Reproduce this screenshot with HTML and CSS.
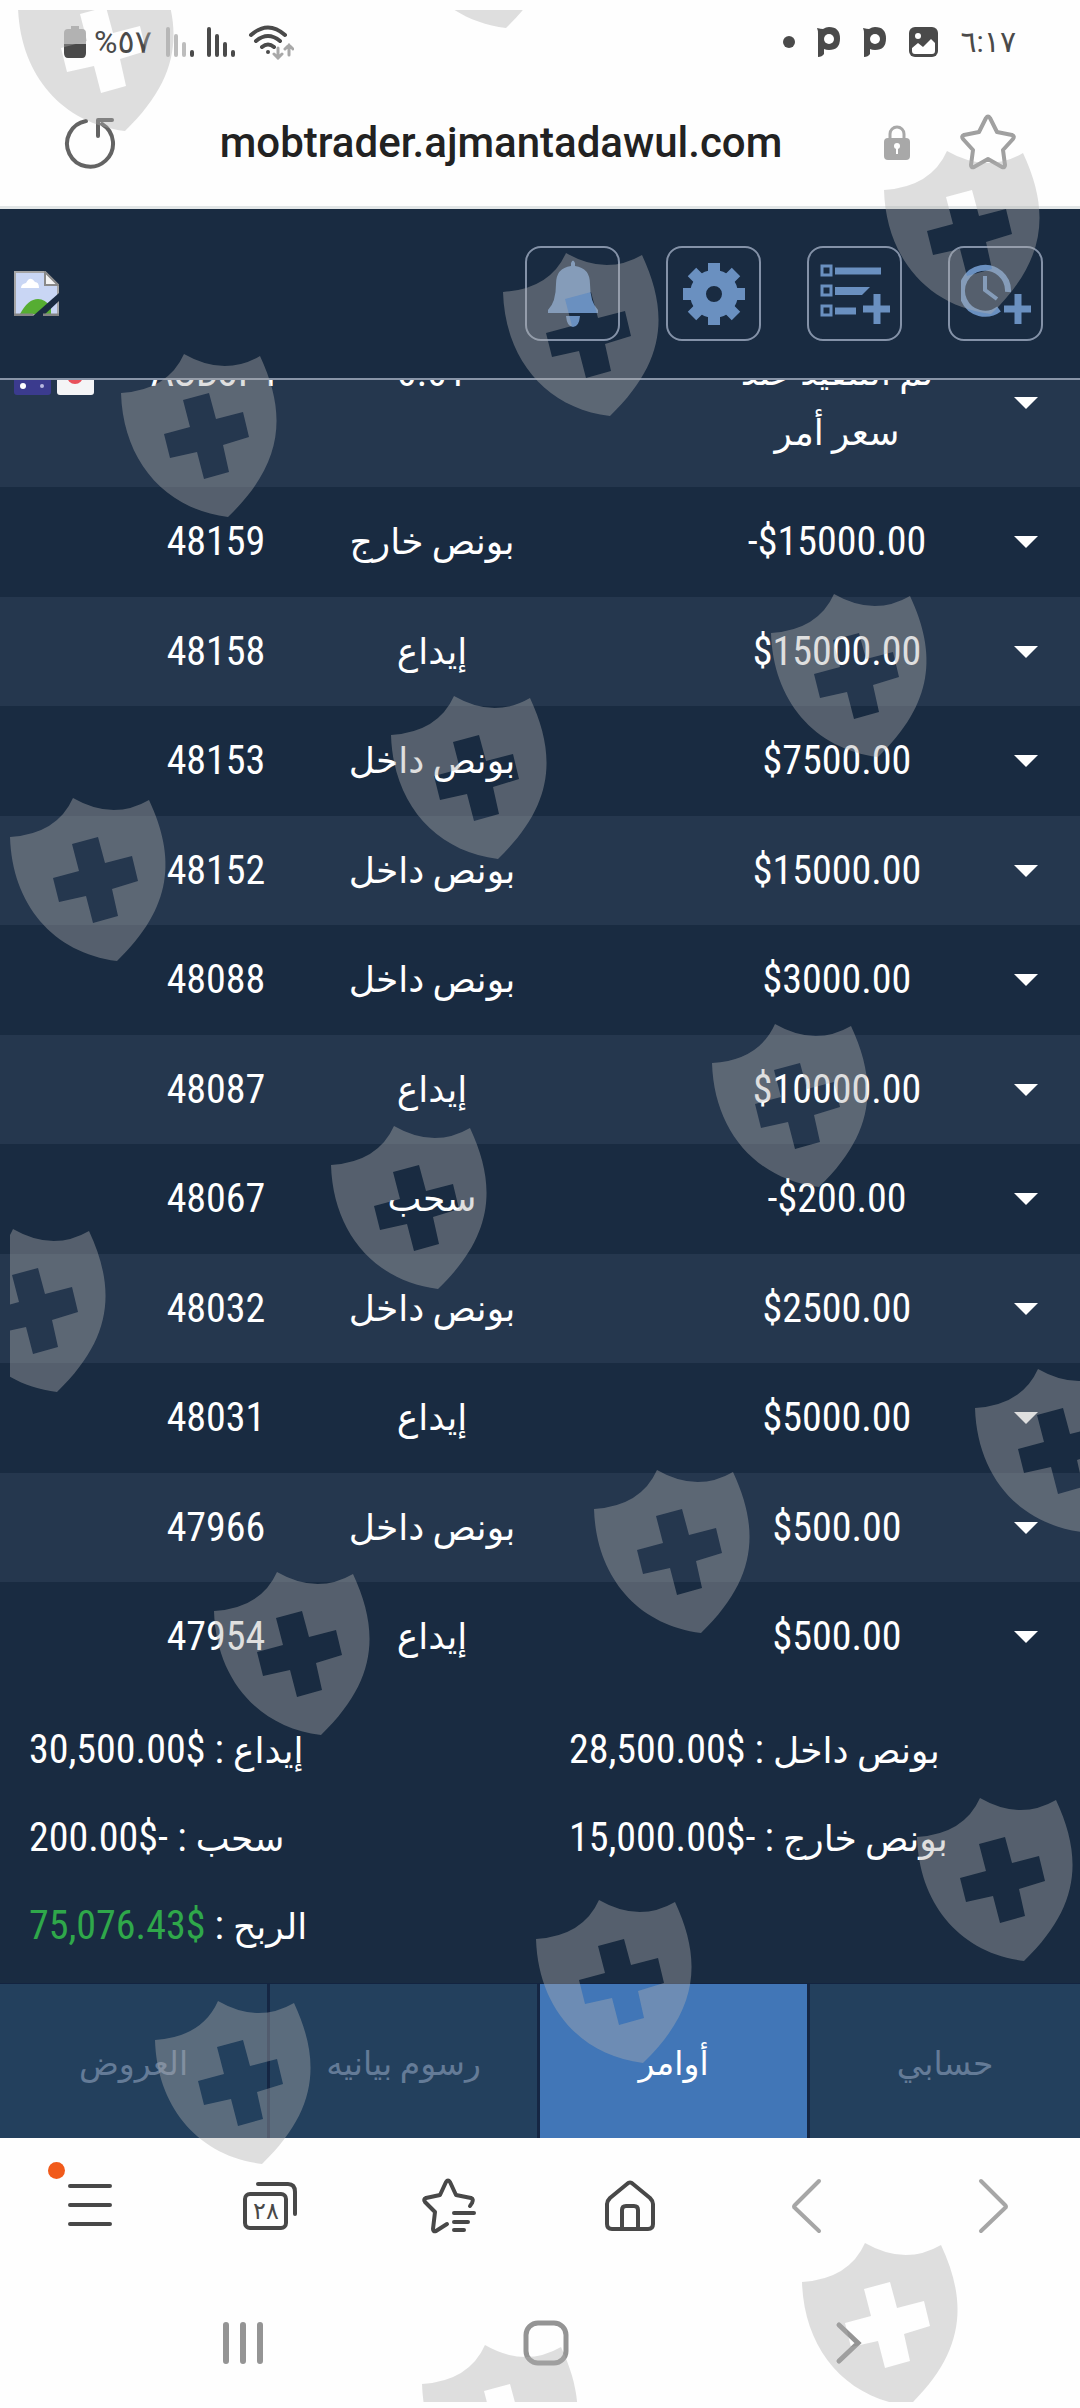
FILE: index.html
```html
<!DOCTYPE html>
<html lang="ar">

<head>
    <meta charset="utf-8">
    <meta name="viewport" content="width=device-width, initial-scale=1">
    <title>mobtrader.ajmantadawul.com</title>
    <link rel="stylesheet" href="styles.css">
</head>

<body>
    <div class="page">
        <div class="status-bar">
            <div class="status-group">
                <svg width="22" height="32" viewBox="0 0 22 32"><path d="M7 0h8v3h3q4 0 4 4v11H0V7q0-4 4-4h3z" fill="#b5b5b5"/><path d="M0 18h22v9q0 5-4 5H4q-4 0-4-5z" fill="#4a4a4a"/></svg>
                <span class="battery-text">%٥٧</span>
                <svg class="signal" width="28" height="32" viewBox="0 0 28 32" fill="none" stroke-width="4" stroke-linecap="round"><path d="M2 3v26M10 10v19M18 18v11" stroke="#bdbdbd"/><path d="M26 26v3" stroke="#4a4a4a"/></svg>
                <svg class="signal" width="28" height="32" viewBox="0 0 28 32" fill="none" stroke="#4a4a4a" stroke-width="4" stroke-linecap="round"><path d="M2 3v26M10 10v19M18 18v11M26 26v3"/></svg>
                <svg width="46" height="36" viewBox="0 0 46 36" fill="none" stroke-width="4" stroke-linecap="round"><path d="M3 11Q20-4 37 11M8 17Q20 7 32 17M14 23Q20 18 26 23" stroke="#4a4a4a"/><circle cx="20" cy="28" r="2" fill="#4a4a4a"/><path d="M30 24v10M26 30l4 4 4-4M41 31V21M37 25l4-4 4 4" stroke="#a8a8a8" stroke-width="3"/></svg>
            </div>
            <div class="status-group status-right">
                <svg width="12" height="12" viewBox="0 0 12 12"><circle cx="6" cy="6" r="6" fill="#4a4a4a"/></svg>
                <svg width="24" height="31" viewBox="0 0 24 31"><path d="M0 1q4 1 6 1Q9 0 12 0q11 0 11 11.500T12 23q-3 0-5-1v5q-2 3-6 3V7Q1 3 0 1z" fill="#4a4a4a"/><circle cx="12" cy="12" r="5" fill="#fff"/></svg>
                <svg width="24" height="31" viewBox="0 0 24 31"><path d="M0 1q4 1 6 1Q9 0 12 0q11 0 11 11.500T12 23q-3 0-5-1v5q-2 3-6 3V7Q1 3 0 1z" fill="#4a4a4a"/><circle cx="12" cy="12" r="5" fill="#fff"/></svg>
                <svg width="29" height="30" viewBox="0 0 29 30"><rect width="29" height="30" rx="6" fill="#4a4a4a"/><circle cx="9" cy="9" r="3" fill="#fff"/><path d="M3 21l6-5 5 4 8-8 4 4v8q0 3-3 3H6q-3 0-3-3z" fill="#fff"/></svg>
                <time class="clock">٦:١٧</time>
            </div>
        </div>

        <div class="address-bar">
            <button class="plain-btn" aria-label="Reload">
                <svg width="54" height="54" viewBox="0 0 54 54" fill="none" stroke="#636363" stroke-width="4" stroke-linecap="round"><path d="M22 6A23 23 0 1 0 38 9"/><path d="M48 5H34v16" stroke-linejoin="round"/></svg>
            </button>
            <a class="url" href="#">mobtrader.ajmantadawul.com</a>
            <svg class="lock" width="26" height="36" viewBox="0 0 26 36"><path d="M6 16V10a7 7 0 0 1 14 0v6" fill="none" stroke="#a8a8a8" stroke-width="3"/><rect y="14" width="26" height="22" rx="4" fill="#a8a8a8"/><circle cx="13" cy="22" r="3" fill="#fff"/><path d="M12 22h2v8h-2z" fill="#fff"/></svg>
            <button class="plain-btn" aria-label="Bookmark">
                <svg width="56" height="56" viewBox="0 0 56 56" fill="none" stroke="#a0a0a0" stroke-width="4" stroke-linejoin="round"><path d="M26 4q2-3 4 0l7 14 15 3q3 1 1 4L43 36l2 15q0 3-3 2l-14-8-14 8q-3 1-3-2l2-15L3 25q-2-3 1-4l15-3z"/></svg>
            </button>
        </div>

        <header class="app-header">
            <svg width="45" height="45" viewBox="0 0 45 45" role="img" aria-label="logo"><path d="M1 1h30l13 13v30H1z" fill="#c9d6f4" stroke="#a5a5a5" stroke-width="2"/><path d="M7 17q0-4 5-5 4-8 9-1 4 0 4 6z" fill="#fff"/><path d="M6 43q8-15 18-15 7 0 13 8v7z" fill="#56ad32"/><path d="M31 1l13 13H31z" fill="#f4f4f4" stroke="#8a8a8a" stroke-width="2"/><path d="M45 22L19 45h10l16-15z" fill="#1a2b41"/><path d="M0 44h19M29 44h16" stroke="#858585" stroke-width="3"/></svg>
            <div class="header-actions">
                <button class="icon-btn" aria-label="Notifications">
                    <svg width="70" height="70" viewBox="0 0 70 70" fill="#6a90c0"><path d="M33 4q2-5 4 0v3q15 2 15 18 0 18 8 26v3H10v-3q8-8 8-26 0-16 15-18zM28 57h14q-1 11-7 11t-7-11z"/></svg>
                </button>
                <button class="icon-btn" aria-label="Settings">
                    <svg width="70" height="70" viewBox="0 0 70 70" fill="none" stroke="#6a90c0"><circle cx="35" cy="35" r="16" stroke-width="16"/><path d="M35 4v10M35 56v10M4 35h10M56 35h10M13 13l7 7M50 50l7 7M57 13l-7 7M20 50l-7 7" stroke-width="12"/></svg>
                </button>
                <button class="icon-btn" aria-label="New order">
                    <svg width="70" height="70" viewBox="0 0 70 70" fill="none" stroke="#6a90c0"><path d="M2 7h9v9H2zM2 27h9v9H2zM2 47h9v9H2z" stroke-width="3"/><path d="M15 12h46M15 52h21M57 35v30M43 50h28" stroke-width="7"/><path d="M15 28h35l-8 8H15z" fill="#6a90c0" stroke="none"/></svg>
                </button>
                <button class="icon-btn" aria-label="New pending order">
                    <svg width="70" height="70" viewBox="0 0 70 70" fill="none" stroke="#6a90c0"><path d="M47 33A23 23 0 1 0 38 50" stroke-width="6"/><path d="M24 17v14l12 9" stroke-width="4"/><path d="M57 35v30M43 50h28" stroke-width="7"/></svg>
                </button>
            </div>
        </header>

        <main class="orders">
            <div class="orders-scroll">
                <table class="orders-table">
                    <colgroup>
                        <col class="col-flag"><col class="col-id"><col class="col-type"><col class="col-gap"><col class="col-amount"><col class="col-more">
                    </colgroup>
                    <tbody>
                        <tr>
                            <td class="flags"><svg width="80" height="27" viewBox="0 0 80 27"><rect width="37" height="27" rx="3" fill="#3b3b8e"/><circle cx="9" cy="18" r="3" fill="#fff"/><circle cx="28" cy="18" r="2" fill="#b9b9e0"/><rect x="43" width="37" height="27" rx="3" fill="#f4f4f6"/><circle cx="61" cy="8" r="8" fill="#e8505b"/></svg></td>
                            <td>AUDJPY</td><td>0.01</td><td></td>
                            <td class="status">تم التنفيذ عند<br>سعر أمر</td>
                            <td class="more"><button class="caret" aria-label="Details"></button></td>
                        </tr>
                        <tr><td></td><td>48159</td><td class="type">بونص خارج</td><td></td><td>-$15000.00</td><td class="more"><button class="caret" aria-label="Details"></button></td></tr>
                        <tr><td></td><td>48158</td><td class="type">إيداع</td><td></td><td>$15000.00</td><td class="more"><button class="caret" aria-label="Details"></button></td></tr>
                        <tr><td></td><td>48153</td><td class="type">بونص داخل</td><td></td><td>$7500.00</td><td class="more"><button class="caret" aria-label="Details"></button></td></tr>
                        <tr><td></td><td>48152</td><td class="type">بونص داخل</td><td></td><td>$15000.00</td><td class="more"><button class="caret" aria-label="Details"></button></td></tr>
                        <tr><td></td><td>48088</td><td class="type">بونص داخل</td><td></td><td>$3000.00</td><td class="more"><button class="caret" aria-label="Details"></button></td></tr>
                        <tr><td></td><td>48087</td><td class="type">إيداع</td><td></td><td>$10000.00</td><td class="more"><button class="caret" aria-label="Details"></button></td></tr>
                        <tr><td></td><td>48067</td><td class="type">سحب</td><td></td><td>-$200.00</td><td class="more"><button class="caret" aria-label="Details"></button></td></tr>
                        <tr><td></td><td>48032</td><td class="type">بونص داخل</td><td></td><td>$2500.00</td><td class="more"><button class="caret" aria-label="Details"></button></td></tr>
                        <tr><td></td><td>48031</td><td class="type">إيداع</td><td></td><td>$5000.00</td><td class="more"><button class="caret" aria-label="Details"></button></td></tr>
                        <tr><td></td><td>47966</td><td class="type">بونص داخل</td><td></td><td>$500.00</td><td class="more"><button class="caret" aria-label="Details"></button></td></tr>
                        <tr><td></td><td>47954</td><td class="type">إيداع</td><td></td><td>$500.00</td><td class="more"><button class="caret" aria-label="Details"></button></td></tr>
                    </tbody>
                </table>
            </div>

            <div class="summary">
                <div><p dir="rtl"><span class="label">إيداع</span> : $30,500.00</p></div>
                <div><p dir="rtl"><span class="label">بونص داخل</span> : $28,500.00</p></div>
                <div><p dir="rtl"><span class="label">سحب</span> : -$200.00</p></div>
                <div><p dir="rtl"><span class="label">بونص خارج</span> : -$15,000.00</p></div>
                <div><p dir="rtl"><span class="label">الربح</span> : <span class="profit">$75,076.43</span></p></div>
            </div>
        </main>

        <nav class="tabs">
            <a href="#">العروض</a>
            <a href="#">رسوم بيانيه</a>
            <a href="#" class="active">أوامر</a>
            <a href="#">حسابي</a>
        </nav>

        <div class="browser-bar">
            <button class="plain-btn menu-btn" aria-label="Menu">
                <svg width="60" height="60" viewBox="0 0 60 60" stroke="#484848" stroke-width="4" stroke-linecap="round"><path d="M10 11h40M10 30h40M10 49h40"/></svg>
                <span class="dot"></span>
            </button>
            <button class="plain-btn" aria-label="Tabs">
                <svg width="60" height="60" viewBox="0 0 60 60" fill="none" stroke="#484848" stroke-width="4" stroke-linecap="round"><rect x="5" y="19" width="41" height="34" rx="5"/><path d="M18 9h30q7 0 7 8v22"/><text class="tab-count" x="26" y="44" text-anchor="middle">٢٨</text></svg>
            </button>
            <button class="plain-btn" aria-label="Bookmarks">
                <svg width="60" height="60" viewBox="0 0 60 60" fill="none" stroke="#484848" stroke-width="4" stroke-linecap="round" stroke-linejoin="round"><path d="M50 31l2-3q2-4-1-5l-15-3-6-13q-2-3-4 0l-6 13-14 3q-3 1-1 4l10 10-2 17q0 3 3 2l11-7M34 38h20M34 47h14M34 55h10"/></svg>
            </button>
            <button class="plain-btn" aria-label="Home">
                <svg width="60" height="60" viewBox="0 0 60 60" fill="none" stroke="#484848" stroke-width="4" stroke-linejoin="round"><path d="M27 9q3-3 6 0l17 14q3 3 3 6v20q0 5-5 5H12q-5 0-5-5V29q0-3 3-6zM22 54V35q0-4 4-4h8q4 0 4 4v19"/></svg>
            </button>
            <button class="plain-btn" aria-label="Back">
                <svg width="60" height="60" viewBox="0 0 60 60" fill="none" stroke="#a6a6a6" stroke-width="4" stroke-linecap="round" stroke-linejoin="round"><path d="M39 6L15 30q-2 2 0 3l24 23"/></svg>
            </button>
            <button class="plain-btn" aria-label="Forward">
                <svg width="60" height="60" viewBox="0 0 60 60" fill="none" stroke="#a6a6a6" stroke-width="4" stroke-linecap="round" stroke-linejoin="round"><path d="M21 6l24 24q2 2 0 3L21 56"/></svg>
            </button>
        </div>

        <div class="system-bar">
            <button class="plain-btn" aria-label="Recent apps">
                <svg width="50" height="50" viewBox="0 0 50 50" stroke="#949494" stroke-width="6" stroke-linecap="round"><path d="M8 7v36M25 7v36M42 7v36"/></svg>
            </button>
            <button class="plain-btn" aria-label="Home screen">
                <svg width="50" height="50" viewBox="0 0 50 50" fill="none" stroke="#949494" stroke-width="5"><rect x="5" y="5" width="40" height="40" rx="12"/></svg>
            </button>
            <button class="plain-btn" aria-label="System back">
                <svg width="50" height="50" viewBox="0 0 50 50" fill="none" stroke="#949494" stroke-width="5" stroke-linecap="round"><path d="M15 7l19 18-19 18"/></svg>
            </button>
        </div>

        <svg class="watermark" viewBox="0 0 1080 2408" aria-hidden="true">
            <defs>
                <path id="shield" fill-rule="evenodd" d="M63 0Q103 23 139 2C166 60 163 109 107 163C43 155 2 106 0 39Q47 36 63 0ZM62 46L88 39L95 65L122 58L128 83L102 91L108 118L83 125L76 98L49 104L43 80L69 73Z"/>
                <clipPath id="frame"><rect x="10" y="10" width="1070" height="2392"/></clipPath>
            </defs>
            <g clip-path="url(#frame)">
                <use href="#shield" x="18" y="-32"/>
                <use href="#shield" x="399" y="-135"/>
                <use href="#shield" x="884" y="151"/>
                <use href="#shield" x="121" y="354"/>
                <use href="#shield" x="503" y="253"/>
                <use href="#shield" x="771" y="594"/>
                <use href="#shield" x="391" y="696"/>
                <use href="#shield" x="10" y="798"/>
                <use href="#shield" x="712" y="1024"/>
                <use href="#shield" x="331" y="1126"/>
                <use href="#shield" x="-50" y="1229"/>
                <use href="#shield" x="975" y="1369"/>
                <use href="#shield" x="594" y="1470"/>
                <use href="#shield" x="214" y="1572"/>
                <use href="#shield" x="917" y="1798"/>
                <use href="#shield" x="536" y="1900"/>
                <use href="#shield" x="155" y="2001"/>
                <use href="#shield" x="802" y="2243"/>
                <use href="#shield" x="422" y="2345"/>
            </g>
        </svg>
    </div>
</body>

</html>
```
FILE: styles.css
```css
* {
    box-sizing: border-box;
}

body {
    font-family: "Roboto Condensed", "Liberation Sans Narrow", Roboto, "DejaVu Sans", sans-serif;
    font-size: 40px;
    margin: 0;
    padding: 0;
    background-color: #fefefe;
}

svg {
    display: block;
}

button {
    font: inherit;
    cursor: pointer;
}

.page {
    position: relative;
    min-height: 100vh;
    overflow: hidden;
    display: flex;
    flex-direction: column;
}

.plain-btn {
    background: none;
    border: none;
    padding: 0;
    display: flex;
    justify-content: center;
    align-items: center;
}

/* phone status bar */
.status-bar {
    display: flex;
    justify-content: space-between;
    align-items: center;
    height: 84px;
    padding: 0 64px;
    color: #4a4a4a;
}

.status-group {
    display: flex;
    align-items: center;
    gap: 8px;
}

.status-right {
    gap: 22px;
}

.signal {
    margin-right: 5px;
}

.battery-text,
.clock {
    font-family: Roboto, "DejaVu Sans", sans-serif;
    font-size: 32px;
    line-height: 40px;
}

.battery-text {
    margin-right: 6px;
}

.clock {
    font-size: 30px;
}

/* address bar */
.address-bar {
    display: flex;
    align-items: center;
    height: 125px;
    padding: 0 64px 6px;
    border-bottom: 3px solid #e2e6e7;
}

.url {
    flex: 1;
    font-family: Roboto, sans-serif;
    font-size: 42px;
    font-weight: 500;
    color: #222;
    text-align: center;
    text-decoration: none;
}

.lock {
    margin-right: 50px;
}

/* application header */
.app-header {
    display: flex;
    justify-content: space-between;
    align-items: center;
    height: 171px;
    padding: 0 37px 0 14px;
    background-color: #192b41;
    border-bottom: 2px solid #8995a8;
}

.header-actions {
    display: flex;
    gap: 46px;
}

.icon-btn {
    width: 95px;
    height: 95px;
    padding: 0;
    display: flex;
    justify-content: center;
    align-items: center;
    background: none;
    border: 2px solid #8492a8;
    border-radius: 16px;
}

/* orders list */
.orders {
    flex: 1;
    background-color: #192b41;
    color: #fff;
}

.orders-scroll {
    overflow: hidden;
}

.orders-table {
    width: 100%;
    margin-top: -62px;
    table-layout: fixed;
    border-collapse: collapse;
}

.orders-table tr:nth-child(odd) {
    background-color: #25374e;
}

.orders-table td {
    height: 110px;
    padding: 25px 0;
    line-height: 60px;
    text-align: center;
    vertical-align: top;
    white-space: nowrap;
}

.orders-table tr:nth-child(odd) td {
    padding-bottom: 24px;
    height: 109px;
}

.orders-table .status,
.orders-table .type,
.label {
    font-size: 36px;
}

.orders-table .flags {
    padding: 50px 0 0 14px;
}

.orders-table .more {
    vertical-align: middle;
}

.col-flag { width: 12%; }
.col-id { width: 16%; }
.col-type { width: 24%; }
.col-gap { width: 13%; }
.col-amount { width: 25%; }
.col-more { width: 10%; }

.caret {
    display: block;
    margin: 0 auto;
    padding: 0;
    background: none;
    border: 12px solid transparent;
    border-top-color: #fff;
    border-bottom: none;
}

/* totals */
.summary {
    display: grid;
    grid-template-columns: 1fr 1fr;
    padding: 14px 0 8px;
    line-height: 88px;
}

.summary div {
    height: 88px;
    padding-left: 29px;
}

.summary p {
    display: inline-block;
    margin: 0;
}

.profit {
    color: #2fa84a;
}

/* bottom tabs */
.tabs {
    display: grid;
    grid-template-columns: repeat(4, 1fr);
    background-color: #23405d;
    border-top: 1px solid #132440;
}

.tabs a {
    padding: 48px 0 42px;
    line-height: 64px;
    font-size: 33px;
    text-align: center;
    text-decoration: none;
    color: #647b97;
    border-right: 3px solid #152643;
}

.tabs a:last-child {
    border-right: none;
}

.tabs .active {
    background-color: #4176b7;
    color: #fff;
}

/* browser toolbar */
.browser-bar {
    display: grid;
    grid-template-columns: repeat(6, 1fr);
    height: 134px;
}

.menu-btn {
    position: relative;
}

.dot {
    position: absolute;
    top: 24px;
    left: 48px;
    width: 17px;
    height: 17px;
    border-radius: 50%;
    background-color: #f15a1a;
}

.tab-count {
    font-family: "DejaVu Sans", sans-serif;
    font-size: 24px;
    fill: #484848;
    stroke: none;
}

/* android navigation */
.system-bar {
    display: grid;
    grid-template-columns: repeat(3, 1fr);
    height: 136px;
    padding: 5px 80px 0 92px;
}

.watermark {
    position: absolute;
    top: 0;
    left: 0;
    width: 100%;
    fill: #b0b0b0;
    fill-opacity: 0.4;
    pointer-events: none;
}
```
